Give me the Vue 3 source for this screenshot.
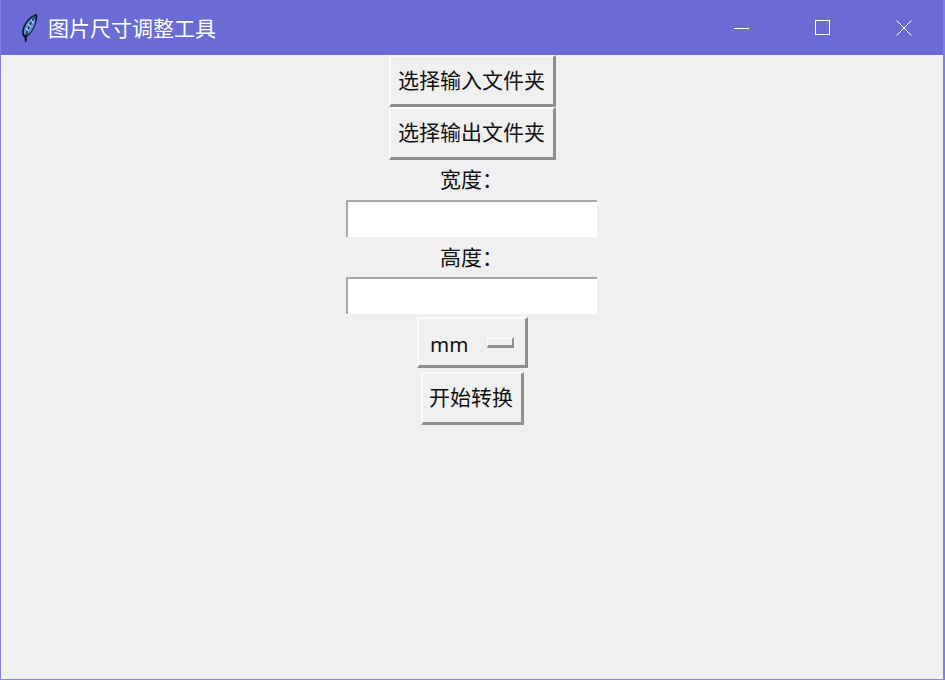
<script setup>
import { ref } from 'vue'

const width = ref('')
const height = ref('')
const unit = ref('mm')
</script>

<template>
  <div class="window">
    <!-- Title bar -->
    <header class="titlebar">
      <svg class="app-icon" width="20" height="30" viewBox="0 0 20 30">
        <path d="M7 29 L6.600 24.500 C4 23.500 3.500 20 5 15 C7 9 12 3 18 1 C19.500 1 19.500 3 19 6 C18 12 15 19 10.500 22.500 L8.800 24 L8.600 29 Z" fill="#0e1220" />
        <path d="M6.500 22 C5 19 6.500 14 9 10 C11.500 6.500 14.500 3.800 17.500 2.800 C18 7 16.500 13 14 17 C12 20 9.500 22.500 6.500 22 Z" fill="#5d93d6" />
        <path d="M8 22.500 C9.500 16 12.500 9.500 17 3.500" fill="none" stroke="#17335f" stroke-width="1.400" />
        <path d="M8 15 L10.500 18 M10 11 L13 14 M13 7.500 L15.500 10" stroke="#b9d7f6" stroke-width="1.300" fill="none" />
      </svg>
      <span class="title">图片尺寸调整工具</span>
      <div class="win-controls">
        <button class="win-btn">
          <svg width="16" height="16" viewBox="0 0 16 16"><path d="M0 8.500 H15" stroke="#fff" fill="none" /></svg>
        </button>
        <button class="win-btn">
          <svg width="16" height="16" viewBox="0 0 16 16"><rect x="0.500" y="0.500" width="14" height="14" stroke="#fff" fill="none" /></svg>
        </button>
        <button class="win-btn">
          <svg width="16" height="16" viewBox="0 0 16 16"><path d="M0.500 0.500 L15.500 15.500 M15.500 0.500 L0.500 15.500" stroke="#fff" fill="none" /></svg>
        </button>
      </div>
    </header>

    <!-- Form -->
    <main class="content">
      <button class="tk-btn wide first">选择输入文件夹</button>
      <button class="tk-btn wide second">选择输出文件夹</button>
      <label class="tk-label width-label">宽度：</label>
      <input v-model="width" class="tk-entry" type="text">
      <label class="tk-label height-label">高度：</label>
      <input v-model="height" class="tk-entry" type="text">
      <div class="tk-option">
        <span class="option-text">{{ unit }}</span>
        <span class="option-mark" />
      </div>
      <button class="tk-btn start">开始转换</button>
    </main>
  </div>
</template>

<style>
html,
body {
  margin: 0;
  background: #f0f0f0;
}
</style>

<style scoped>
.window {
  width: 945px;
  height: 680px;
  box-sizing: border-box;
  display: flex;
  flex-direction: column;
  overflow: hidden;
  background: #f0f0f0;
  border-left: 1px solid #7f7fe6;
  border-right: 2px solid #7f7fe6;
  border-bottom: 1px solid #8a8ad8;
  font-family: "Liberation Sans", "Noto Sans CJK SC", sans-serif;
}

.titlebar {
  height: 55px;
  margin: 0 -2px 0 -1px;
  flex-shrink: 0;
  display: flex;
  align-items: center;
  padding-left: 18px;
  background: #6b6bd6;
  color: #fff;
}

.app-icon {
  flex-shrink: 0;
}

.title {
  margin-left: 10px;
  padding-bottom: 2px;
  font-family: "Noto Sans CJK SC", sans-serif;
  font-size: 21px;
  line-height: 28px;
}

.win-controls {
  margin-left: auto;
  padding-right: 1px;
  display: flex;
}

.win-btn {
  width: 81px;
  height: 55px;
  display: flex;
  align-items: center;
  justify-content: center;
  padding: 0;
  border: none;
  background: transparent;
}

.content {
  display: flex;
  flex-direction: column;
  align-items: center;
}

.tk-btn,
.tk-option {
  box-sizing: border-box;
  border-style: solid;
  border-width: 2px 3px 3px 2px;
  border-color: #fbfbfb #8f8f8f #8f8f8f #fbfbfb;
  background: #f0f0f0;
  color: #111;
}

.tk-btn {
  padding: 0 1px 4px 0;
  font-family: "Noto Sans CJK SC", sans-serif;
  font-size: 21px;
  line-height: 28px;
}

.wide {
  width: 167px;
  margin-left: 1px;
}

.first {
  height: 52px;
}

.second {
  height: 53px;
}

.start {
  width: 103px;
  height: 53px;
  margin-top: 4px;
}

.tk-label {
  height: 28px;
  margin-right: 1px;
  font-family: "Noto Sans CJK SC", sans-serif;
  font-size: 21px;
  line-height: 28px;
  color: #111;
}

.width-label {
  margin-top: 4px;
  margin-bottom: 8px;
}

.height-label {
  margin-top: 5px;
  margin-bottom: 7px;
}

.tk-entry {
  box-sizing: border-box;
  width: 251px;
  height: 37px;
  margin-right: 1px;
  padding: 0 4px;
  border-style: solid;
  border-width: 2px 0 0 2px;
  border-color: #a9a9a9 #fff #fff #a9a9a9;
  border-radius: 0;
  outline: none;
  background: #fff;
}

.tk-option {
  width: 111px;
  height: 51px;
  margin-top: 3px;
  margin-left: 1px;
  display: flex;
  align-items: center;
  padding-left: 11px;
}

.option-text {
  padding-top: 3px;
  font-family: "Noto Sans", sans-serif;
  font-size: 20.500px;
  line-height: 28px;
}

.option-mark {
  box-sizing: border-box;
  width: 27px;
  height: 11px;
  margin-left: 19px;
  border-style: solid;
  border-width: 2px 2px 3px 1px;
  border-color: #fbfbfb #8f8f8f #8f8f8f #fbfbfb;
}
</style>
